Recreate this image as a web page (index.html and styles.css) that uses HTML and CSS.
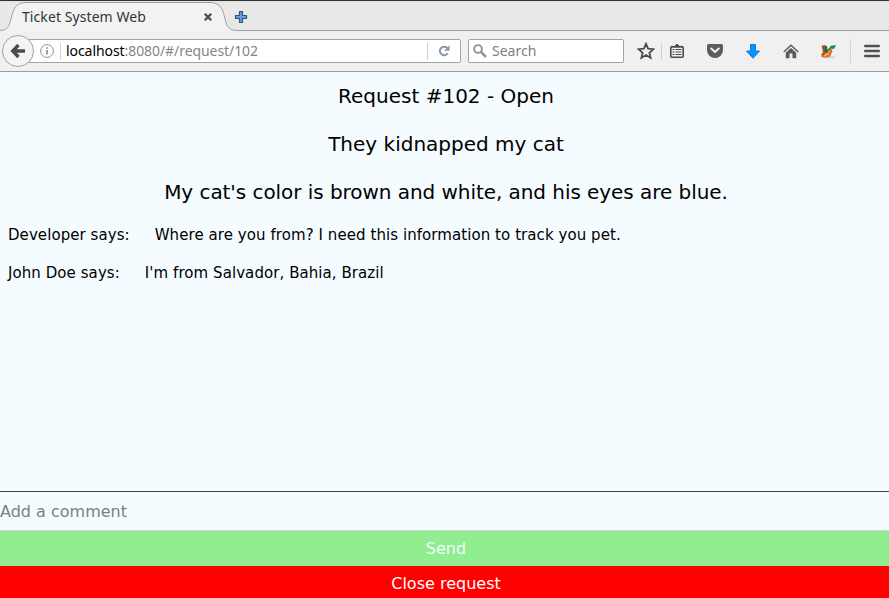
FILE: index.html
```html
<!DOCTYPE html>
<html lang="en">
<head>
<meta charset="utf-8">
<title>Ticket System Web</title>
<link rel="stylesheet" href="styles.css">
</head>
<body>
<div class="window">
  <header class="tabs">
    <div class="tab">
      <svg class="tab-shape" width="241" height="30" viewBox="0 0 241 30">
        <path d="M0 29.5C7 29.5 9 26 11 18C13 8 16 1.5 26 1.5H210C220 1.5 223 8 225 18C227 26 229 29.5 237 29.5V30H0Z" fill="#f2f2f2"/>
        <path d="M0 29.5C7 29.5 9 26 11 18C13 8 16 1.5 26 1.5H210C220 1.5 223 8 225 18C227 26 229 29.5 237 29.5H241" fill="none" stroke="#9da0a4"/>
      </svg>
      <div class="tab-content">
        <span class="tab-title">Ticket System Web</span>
        <svg width="10" height="10" viewBox="0 0 10 10"><path d="M1.8 1.8L8.2 8.2M8.2 1.8L1.8 8.2" stroke="#464b4d" stroke-width="2.3"/></svg>
      </div>
    </div>
    <svg class="new-tab" width="14" height="14" viewBox="0 0 14 14"><path d="M5.5 1.5h3v4h4v3h-4v4h-3v-4h-4v-3h4z" fill="#6f9cd0" stroke="#295590" stroke-width="1.2" stroke-linejoin="round"/></svg>
  </header>
  <nav class="toolbar">
    <div class="back">
      <svg width="16" height="16" viewBox="0 0 16 16"><path d="M8.5 2L2.8 8l5.7 6M3.5 8H15" fill="none" stroke="#4c4c4c" stroke-width="3.4"/></svg>
    </div>
    <div class="address">
      <svg class="info" width="14" height="14" viewBox="0 0 14 14"><circle cx="7" cy="7" r="6.4" fill="none" stroke="#929292"/><path d="M7 6v4.5M7 3.2v1.6" stroke="#858585" stroke-width="1.6"/></svg>
      <span class="url"><b>localhost</b>:8080/#/request/102</span>
      <span class="reload"><svg width="12" height="12" viewBox="0 0 12 12"><path d="M9.5 3.2A4.3 4.3 0 1 0 9.8 8.3" fill="none" stroke="#8899a8" stroke-width="2"/><path d="M11.5 0.3V5.7H6z" fill="#8899a8"/></svg></span>
    </div>
    <div class="search">
      <svg width="14" height="14" viewBox="0 0 14 14"><circle cx="5" cy="5" r="3.9" fill="none" stroke="#939393" stroke-width="1.9"/><path d="M7.9 7.9L13 13" stroke="#939393" stroke-width="2.5"/></svg>
      <span>Search</span>
    </div>
    <div class="actions">
      <div class="action star"><svg width="18" height="18" viewBox="0 0 18 18"><path d="M9 1.8l2.1 4.9 5.3.5-4 3.5 1.2 5.2L9 13.1l-4.6 2.8 1.2-5.2-4-3.5 5.3-.5z" fill="none" stroke="#4c4c4c" stroke-width="1.8"/></svg></div>
      <div class="action list"><svg width="14" height="16" viewBox="0 0 14 16"><path d="M4.5 3.5L7 1l2.5 2.5z" fill="#4c4c4c" stroke="#4c4c4c"/><rect x=".8" y="3.8" width="12.4" height="10.4" rx="1" fill="#f0f0f0" stroke="#4c4c4c" stroke-width="1.6"/><path d="M1 3.7h12" stroke="#4c4c4c" stroke-width="1.6"/><path d="M2.5 6.5h2m1 0h6M2.5 9h2m1 0h6M2.5 11.5h2m1 0h6" stroke="#4c4c4c"/></svg></div>
      <div class="action pocket"><svg width="16" height="14" viewBox="0 0 16 14"><path d="M1.5 0h13Q16 0 16 1.5V6A8 8 0 0 1 0 6V1.5Q0 0 1.5 0z" fill="#5c5c5c"/><path d="M4.2 4.5L8 8.1l3.8-3.6" fill="none" stroke="#f0f0f0" stroke-width="2" stroke-linecap="round" stroke-linejoin="round"/></svg></div>
      <div class="action download"><svg width="14" height="15" viewBox="0 0 14 15"><path d="M4.5.5h5V7h4L7 14.3.5 7h4z" fill="#0794ff" stroke="#1179df" stroke-linejoin="round"/></svg></div>
      <div class="action home"><svg width="16" height="15" viewBox="0 0 16 15"><path d="M.8 8L8 1.2 15.2 8" fill="none" stroke="#5a5a5a" stroke-width="1.5"/><path d="M2.8 8.8L8 4l5.2 4.8V14.3H9.5V9.5h-3v4.8H2.8z" fill="#5a5a5a"/></svg></div>
      <div class="action addon"><svg width="17" height="15" viewBox="0 0 17 15"><ellipse cx="9" cy="13.2" rx="6.5" ry="1" fill="#d0cfc9"/><path d="M3.5 7L11 4.5 12.5 7 10 12.5 6 13.8 1.5 13 1 10.5z" fill="#e8682c"/><path d="M5 9.5L10 6.5M4 12l5-2.5" stroke="#f9c878" stroke-width="1.2"/><path d="M1.5 1.5H6L5.5 9 3 8z" fill="#b04a24"/><path d="M4 1.5L7 2 7.5 6 11 1.7 16 1l-2 4-3-.5L6.5 9.5 4.5 8z" fill="#22893b"/><path d="M6 2.5L5.8 9M3 11l1.5-2" stroke="#642d16"/></svg></div>
      <div class="action menu"><svg width="16" height="14" viewBox="0 0 16 14"><path d="M1.3 2h13.4M1.3 7h13.4M1.3 12h13.4" stroke="#505050" stroke-width="2.6" stroke-linecap="round"/></svg></div>
    </div>
  </nav>
  <main class="request">
    <h1>Request #102 - Open</h1>
    <h2>They kidnapped my cat</h2>
    <p class="description">My cat's color is brown and white, and his eyes are blue.</p>
    <div class="comments">
      <div class="comment"><span>Developer says:</span><span>Where are you from? I need this information to track you pet.</span></div>
      <div class="comment"><span>John Doe says:</span><span>I'm from Salvador, Bahia, Brazil</span></div>
    </div>
  </main>
  <form class="reply">
    <input type="text" placeholder="Add a comment" aria-label="Add a comment">
    <button class="send" type="button">Send</button>
    <button class="close" type="button">Close request</button>
  </form>
</div>
</body>
</html>
```
FILE: styles.css
```css
* { box-sizing: border-box; }
body { margin: 0; font-family: "DejaVu Sans", sans-serif; color: #000; background: #f5fcff; }
svg { display: block; flex: none; }
.window { height: 598px; display: flex; flex-direction: column; overflow: hidden; }

.tabs { height: 31px; flex: none; display: flex; border-top: 1px solid #303136; background: linear-gradient(#e2e2df, #e9e9e7 5px, #e8e8e6); box-shadow: inset 0 -1px #9da0a4; font-family: "Noto Sans", sans-serif; }
.tab { display: grid; width: 234px; flex: none; }
.tab-shape, .tab-content { grid-area: 1 / 1; }
.tab-content { display: flex; align-items: center; justify-content: space-between; width: 213px; padding-left: 22px; height: 30px; }
.tab-content svg { margin-top: 2px; }
.tab-title { font-size: 14px; letter-spacing: .08px; line-height: 20px; color: #303638; margin-top: 2px; white-space: nowrap; }
.new-tab { margin-top: 9px; z-index: 1; }

.toolbar { height: 41px; flex: none; display: flex; align-items: center; background: #f0f0f0; border-bottom: 1px solid #9d9d9d; padding-left: 2px; font-family: "Noto Sans", sans-serif; font-size: 14px; }
.back { width: 32px; height: 32px; border: 1px solid #a1a1a1; border-radius: 50%; background: #f4f4f4; display: grid; place-items: center; flex: none; z-index: 1; }
.address, .search { height: 24px; background: #fff; border: 1px solid #a3a3a0; border-radius: 2px; display: flex; align-items: center; }
.address { width: 433px; flex: none; margin-left: -6px; padding-left: 11px; }
.info { margin-right: 6px; }
.url { flex: 1; border-left: 1px solid #d5d5d5; padding: 0 0 2px 5px; line-height: 15px; color: #858585; letter-spacing: -.07px; }
.url b { color: #000; font-weight: normal; }
.reload { width: 33px; height: 17px; border-left: 1px solid #d0d0d0; display: flex; align-items: center; padding-left: 10px; }
.search { width: 156px; flex: none; margin-left: 7px; padding-left: 4px; gap: 5px; color: #808080; }
.search span { padding-bottom: 2px; }
.actions { display: flex; flex: 1; height: 40px; }
.action { display: grid; place-items: center; flex: none; width: 38px; }
.star { width: 30px; margin-left: 7px; }
.list { width: 35px; background: linear-gradient(#d0d0d0, #d0d0d0) 0 12px / 1px 17px no-repeat; }
.list svg { margin-right: 3px; }
.pocket { width: 38px; }
.addon { width: 37px; }
.menu { width: 39px; background: linear-gradient(transparent, #d4d4d4 20%, #d4d4d4 80%, transparent) 0 5px / 1px 30px no-repeat; margin-left: 3px; }
.menu svg { margin-left: 5px; }

.request { flex: 1; min-height: 0; text-align: center; padding-left: 3px; }
h1, h2, .description { font-size: 20px; font-weight: normal; line-height: 24px; margin: 12px 0 24px; }
h2 { margin-top: 0; }
.description { margin: 0; letter-spacing: -.055px; }
.comments { text-align: left; margin: 22px 0 0 5px; display: grid; gap: 20px; }
.comment { display: flex; gap: 25px; font-size: 15px; line-height: 18px; letter-spacing: .07px; }

.reply { margin: 0; height: 107px; flex: none; display: flex; flex-direction: column; border-top: 1px solid #3d4346; }
.reply input { height: 39px; border: 0; border-bottom: 1px solid #d4d3d9; padding: 0; background: #f5fcff; font: 16px "DejaVu Sans", sans-serif; }
.reply input::placeholder { color: #7c8082; opacity: 1; }
.reply button { border: 0; padding: 0 0 0 3px; font: 16px "DejaVu Sans", sans-serif; }
.send { height: 35px; background: #90ee90; color: #f5fcff; }
.reply .close { height: 32px; padding-top: 2px; background: #f00; color: #fff; }
```
